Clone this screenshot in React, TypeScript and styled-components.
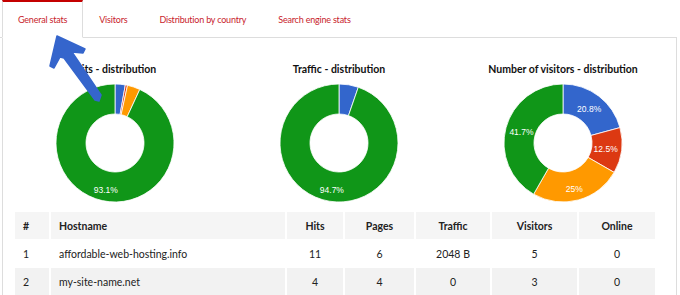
import React from 'react';
import styled, { createGlobalStyle } from 'styled-components';

const red    = '#c8232c';
const line   = '#dddddd';
const ink    = '#222222';
const font   = `Lato, "Noto Sans", sans-serif`;

const GlobalStyle = createGlobalStyle`
    html, body { margin: 0; padding: 0; background: #fff; }
    body { font-family: ${font}; color: ${ink}; }
`;

// ── Layout ────────────────────────────────────────────────────────────────────

const Screen = styled.div`
    position: relative;
    width: 680px;
    height: 295px;
    overflow: hidden;
    background: #fff;
`;

// ── Tabs ──────────────────────────────────────────────────────────────────────

const TabBar = styled.div`
    display: flex;
    height: 38px;
    box-sizing: border-box;
    padding-left: 2px;
    margin-right: 3px;
    border-bottom: 1px solid ${line};
`;

const Tab = styled.div<{ $active?: boolean }>`
    display: flex;
    align-items: center;
    align-self: flex-start;
    height: 38px;
    box-sizing: border-box;
    padding: 0 15px;
    font-size: 9px;
    letter-spacing: -0.2px;
    color: ${red};
    white-space: nowrap;
    border: 1px solid transparent;
    border-top: 2px solid transparent;
    ${p => p.$active && `
        background: #fff;
        border-color: ${line};
        border-top-color: #c40000;
        border-bottom-color: #fff;
    `}
`;

// ── Panel ─────────────────────────────────────────────────────────────────────

const Panel = styled.div`
    margin-left: 2px;
    width: 675px;
    height: 257px;
    box-sizing: border-box;
    border-left: 1px solid ${line};
    border-right: 1px solid ${line};
`;

const ChartRow = styled.div`
    display: flex;
    padding-top: 24px;
`;

const ChartCol = styled.div`
    width: 224px;
    display: flex;
    flex-direction: column;
    align-items: center;
`;

const ChartTitle = styled.div`
    font-size: 10.5px;
    font-weight: 700;
    line-height: 14px;
    color: #111;
    margin-bottom: 1px;
`;

const ChartBox = styled.svg`
    display: block;
`;

// ── Table ─────────────────────────────────────────────────────────────────────

const Table = styled.table`
    margin: 4px 0 0 10px;
    width: 644px;
    table-layout: fixed;
    border-collapse: separate;
    border-spacing: 2px 1px;
    font-size: 10.5px;
`;

const Th = styled.th<{ $w: number; $left?: boolean }>`
    width: ${p => p.$w}px;
    box-sizing: border-box;
    height: 27px;
    padding: 0 0 0 ${p => (p.$left ? 8 : 0)}px;
    background: #f5f5f5;
    font-weight: 700;
    text-align: ${p => (p.$left ? 'left' : 'center')};
    color: ${ink};
`;

const Tr = styled.tr<{ $shade?: boolean }>`
    background: ${p => (p.$shade ? '#f2f2f2' : '#fff')};
`;

const Td = styled.td<{ $left?: boolean }>`
    height: 27px;
    padding: 0 0 0 ${p => (p.$left ? 8 : 0)}px;
    text-align: ${p => (p.$left ? 'left' : 'center')};
    color: ${ink};
`;

const Overlay = styled.svg`
    position: absolute;
    left: 0;
    top: 0;
    pointer-events: none;
`;

// ── Data ──────────────────────────────────────────────────────────────────────

const colors = ['#3366cc', '#dc3912', '#ff9900', '#109618'];

type Chart = { title: string; slices: number[] };

const charts: Chart[] = [
    { title: 'Hits - distribution', slices: [2.8, 0.6, 3.5, 93.1] },
    { title: 'Traffic - distribution', slices: [5.3, 0, 0, 94.7] },
    { title: 'Number of visitors - distribution', slices: [20.8, 12.5, 25, 41.7] },
];

const columns = [
    { name: '#', w: 34, left: true },
    { name: 'Hostname', w: 234, left: true },
    { name: 'Hits', w: 56 },
    { name: 'Pages', w: 69 },
    { name: 'Traffic', w: 74 },
    { name: 'Visitors', w: 85 },
    { name: 'Online', w: 76 },
];

const rows = [
    ['1', 'affordable-web-hosting.info', '11', '6', '2048 B', '5', '0'],
    ['2', 'my-site-name.net', '4', '4', '0', '3', '0'],
];

// ── Donut ─────────────────────────────────────────────────────────────────────

const CX = 112, CY = 66, R = 59, HOLE = 29;

const pt = (r: number, a: number) => `${(CX + r * Math.sin(a)).toFixed(2)} ${(CY - r * Math.cos(a)).toFixed(2)}`;

function arc(a0: number, a1: number) {
    const large = a1 - a0 > Math.PI ? 1 : 0;
    return `M${pt(R, a0)} A${R} ${R} 0 ${large} 1 ${pt(R, a1)} L${pt(HOLE, a1)} A${HOLE} ${HOLE} 0 ${large} 0 ${pt(HOLE, a0)} Z`;
}

function Donut({ slices }: { slices: number[] }) {
    let acc = 0;
    return (
        <ChartBox width={224} height={130} viewBox="0 0 224 130">
            {slices.map((v, i) => {
                const start = acc;
                acc += v;
                if (!v) return null;
                const a0 = (start / 100) * Math.PI * 2;
                const a1 = (acc / 100) * Math.PI * 2;
                const mid = (a0 + a1) / 2;
                const down = Math.max(0, -Math.cos(mid));
                const lx = CX + 43 * Math.sin(mid);
                const ly = CY - 43 * Math.cos(mid) + 5 * down;
                return (
                    <g key={i}>
                        <path d={arc(a0, a1)} fill={colors[i]} stroke="#fff" strokeWidth={0.8} />
                        {v > 8 && (
                            <text x={lx} y={ly} fill="#fff" fontSize={8.5} textAnchor="middle"
                                dominantBaseline="central" fontFamily='"Liberation Sans", Arial, sans-serif'>
                                {v}%
                            </text>
                        )}
                    </g>
                );
            })}
        </ChartBox>
    );
}

// ── Component ─────────────────────────────────────────────────────────────────

export default function App() {
    return (
        <Screen>
            <GlobalStyle />
            <TabBar>
                <Tab $active>General stats</Tab>
                <Tab>Visitors</Tab>
                <Tab>Distribution by country</Tab>
                <Tab>Search engine stats</Tab>
            </TabBar>

            <Panel>
                <ChartRow>
                    {charts.map(c => (
                        <ChartCol key={c.title}>
                            <ChartTitle>{c.title}</ChartTitle>
                            <Donut slices={c.slices} />
                        </ChartCol>
                    ))}
                </ChartRow>

                <Table>
                    <thead>
                        <tr>
                            {columns.map(c => <Th key={c.name} $w={c.w} $left={c.left}>{c.name}</Th>)}
                        </tr>
                    </thead>
                    <tbody>
                        {rows.map((r, i) => (
                            <Tr key={r[0]} $shade={i % 2 === 1}>
                                {r.map((cell, j) => <Td key={j} $left={j < 2}>{cell}</Td>)}
                            </Tr>
                        ))}
                    </tbody>
                </Table>
            </Panel>

            <Overlay width={680} height={295}>
                <path
                    d="M57 36 L85 49 L83 53 L72 52 L101 95 L99 101 L95 100 L64 58 L60 57 L54 68 L50 66 Z"
                    fill="#3565cc"
                    stroke="#3565cc"
                    strokeWidth={1.5}
                    strokeLinejoin="round"
                />
            </Overlay>
        </Screen>
    );
}
